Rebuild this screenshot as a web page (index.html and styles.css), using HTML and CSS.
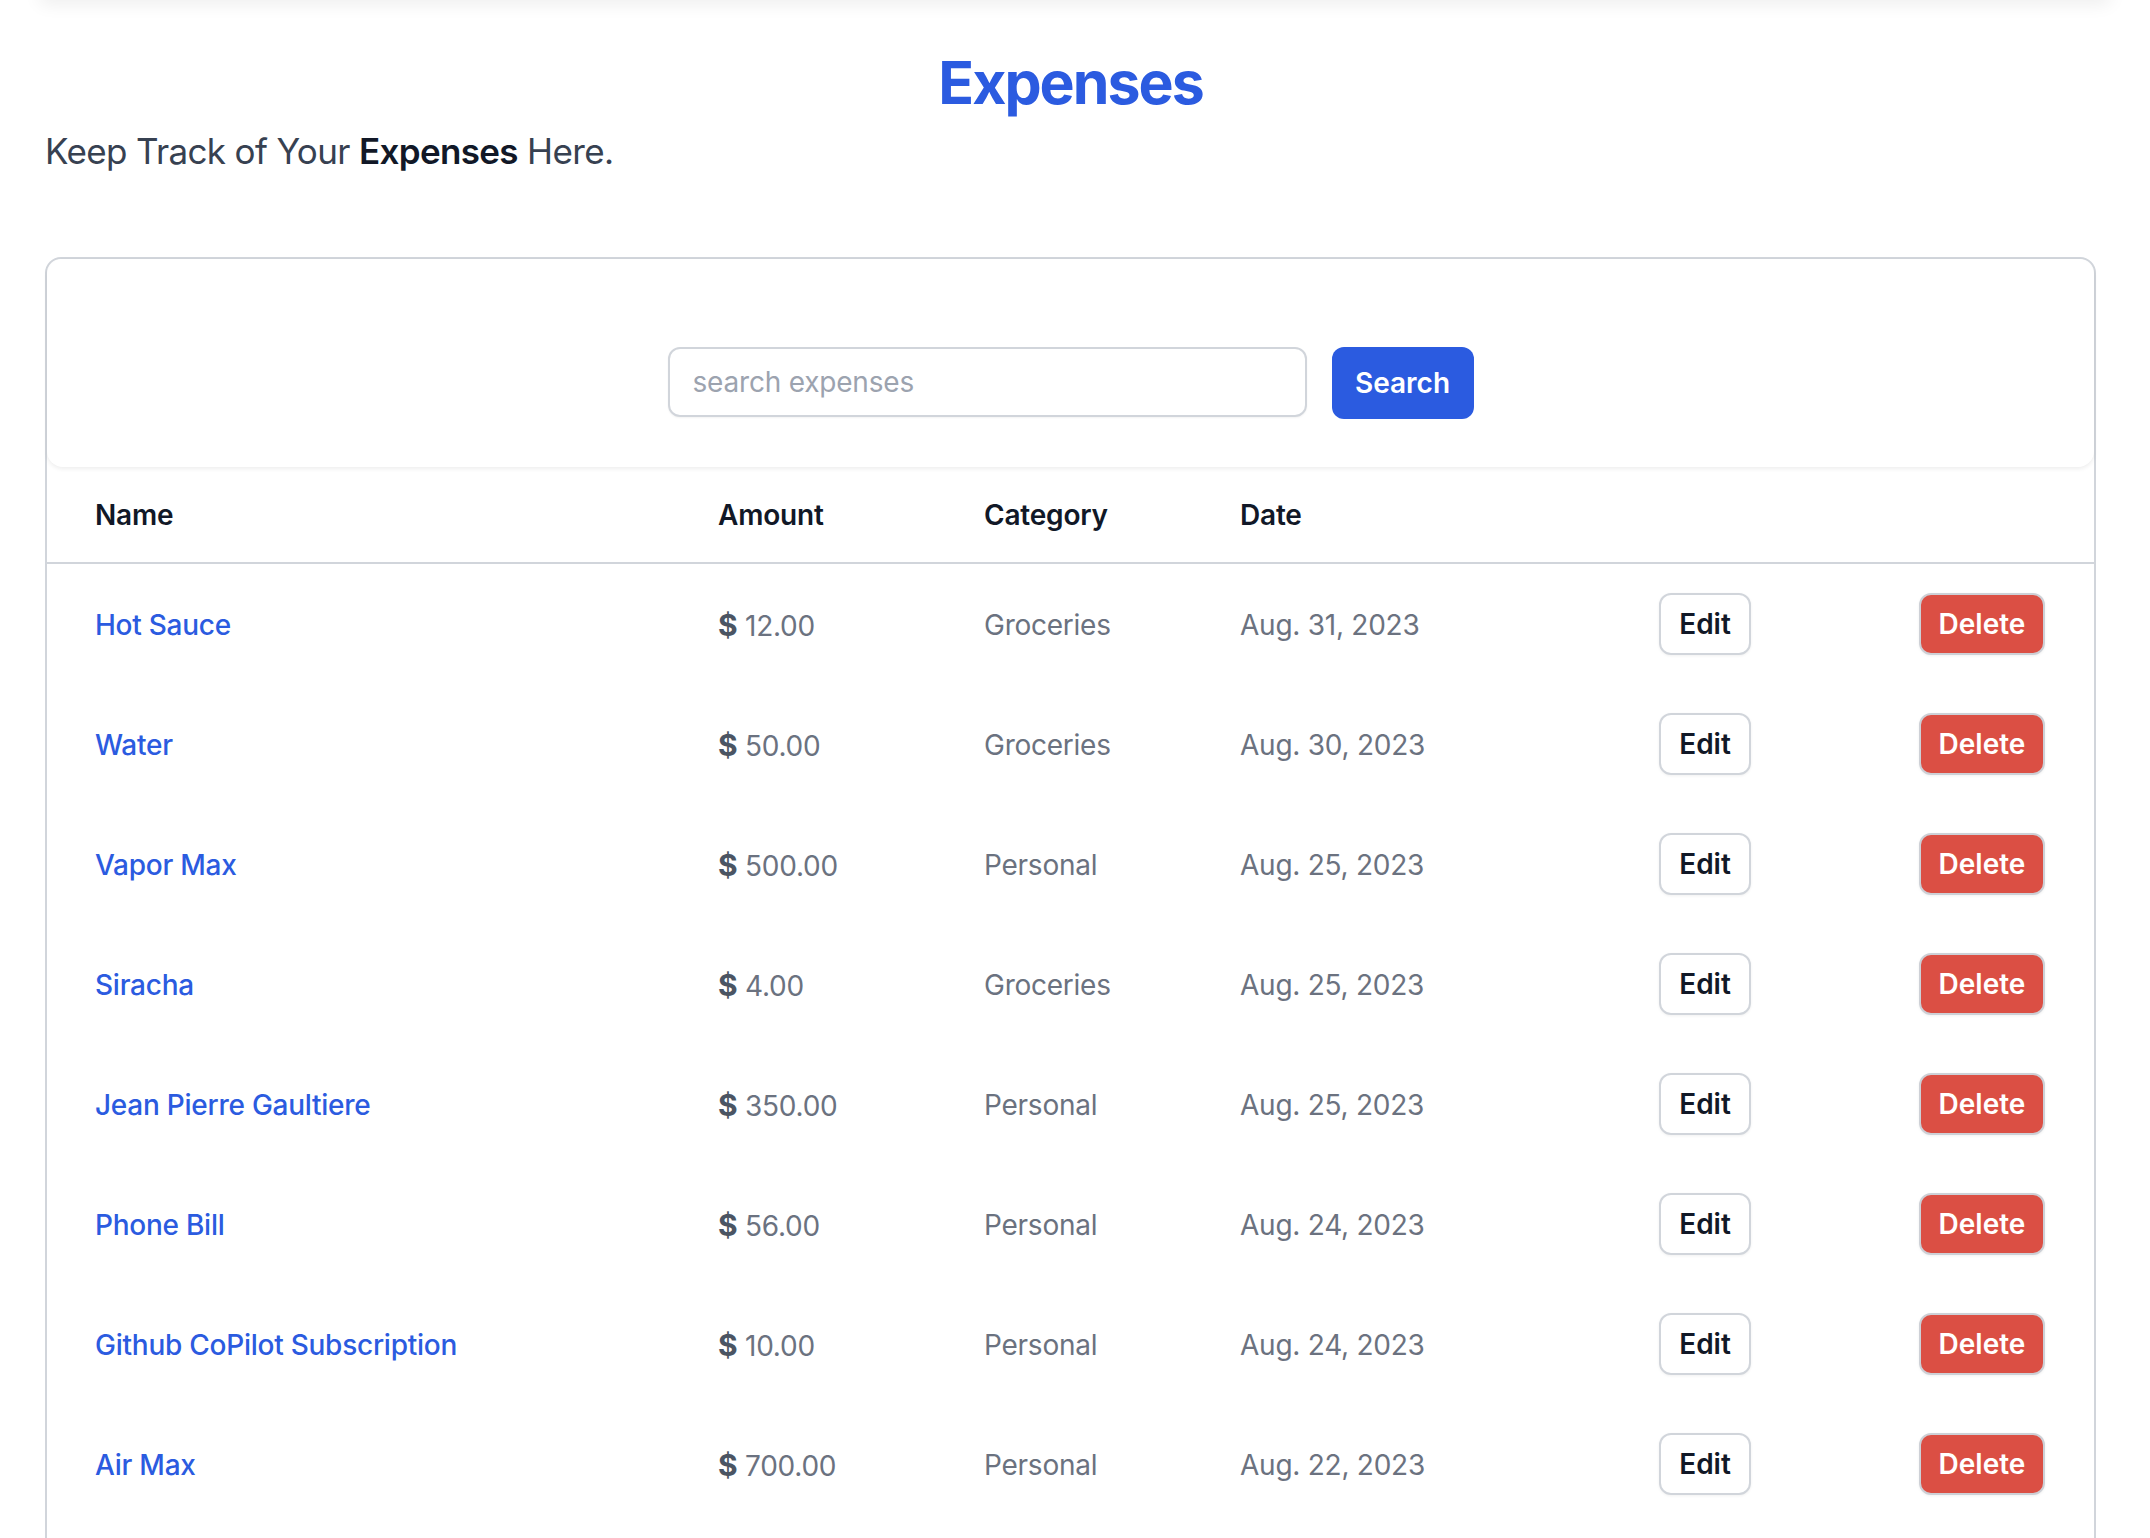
FILE: index.html
```html
<!DOCTYPE html>
<html lang="en">
<head>
<meta charset="utf-8">
<title>Expenses</title>
<link rel="stylesheet" href="styles.css">
</head>
<body>
<div class="navbar"></div>
<main class="container">
  <h1 class="title">Expenses</h1>
  <p class="subtitle">Keep Track of Your <strong>Expenses</strong> Here.</p>
  <section class="card">
    <form class="search">
      <input class="search-input" type="text" placeholder="search expenses">
      <button class="btn btn-primary" type="button">Search</button>
    </form>
    <table class="table">
      <colgroup>
        <col class="col-name"><col class="col-amount"><col class="col-category"><col class="col-date"><col class="col-edit"><col class="col-delete">
      </colgroup>
      <thead>
        <tr><th>Name</th><th>Amount</th><th>Category</th><th>Date</th><th></th><th></th></tr>
      </thead>
      <tbody>
        <tr><td><a class="name" href="#">Hot Sauce</a></td><td class="amount"><b>$</b> 12.00</td><td class="muted">Groceries</td><td class="muted">Aug. 31, 2023</td><td><button class="btn btn-edit" type="button">Edit</button></td><td><button class="btn btn-delete" type="button">Delete</button></td></tr>
        <tr><td><a class="name" href="#">Water</a></td><td class="amount"><b>$</b> 50.00</td><td class="muted">Groceries</td><td class="muted">Aug. 30, 2023</td><td><button class="btn btn-edit" type="button">Edit</button></td><td><button class="btn btn-delete" type="button">Delete</button></td></tr>
        <tr><td><a class="name" href="#">Vapor Max</a></td><td class="amount"><b>$</b> 500.00</td><td class="muted">Personal</td><td class="muted">Aug. 25, 2023</td><td><button class="btn btn-edit" type="button">Edit</button></td><td><button class="btn btn-delete" type="button">Delete</button></td></tr>
        <tr><td><a class="name" href="#">Siracha</a></td><td class="amount"><b>$</b> 4.00</td><td class="muted">Groceries</td><td class="muted">Aug. 25, 2023</td><td><button class="btn btn-edit" type="button">Edit</button></td><td><button class="btn btn-delete" type="button">Delete</button></td></tr>
        <tr><td><a class="name" href="#">Jean Pierre Gaultiere</a></td><td class="amount"><b>$</b> 350.00</td><td class="muted">Personal</td><td class="muted">Aug. 25, 2023</td><td><button class="btn btn-edit" type="button">Edit</button></td><td><button class="btn btn-delete" type="button">Delete</button></td></tr>
        <tr><td><a class="name" href="#">Phone Bill</a></td><td class="amount"><b>$</b> 56.00</td><td class="muted">Personal</td><td class="muted">Aug. 24, 2023</td><td><button class="btn btn-edit" type="button">Edit</button></td><td><button class="btn btn-delete" type="button">Delete</button></td></tr>
        <tr><td><a class="name" href="#">Github CoPilot Subscription</a></td><td class="amount"><b>$</b> 10.00</td><td class="muted">Personal</td><td class="muted">Aug. 24, 2023</td><td><button class="btn btn-edit" type="button">Edit</button></td><td><button class="btn btn-delete" type="button">Delete</button></td></tr>
        <tr><td><a class="name" href="#">Air Max</a></td><td class="amount"><b>$</b> 700.00</td><td class="muted">Personal</td><td class="muted">Aug. 22, 2023</td><td><button class="btn btn-edit" type="button">Edit</button></td><td><button class="btn btn-delete" type="button">Delete</button></td></tr>
      </tbody>
    </table>
  </section>
</main>
</body>
</html>
```

FILE: styles.css
```css
* { box-sizing: border-box; }

html, body { background: #ffffff; }

body {
  margin: 0;
  font-family: Inter, "Noto Sans", "Liberation Sans", sans-serif;
  color: #111827;
}

.navbar {
  height: 20px;
  margin: -20px 40px 0 40px;
  background: #ffffff;
  box-shadow: 0 4px 18px rgba(0, 0, 0, 0.07);
}

.container {
  width: 2051px;
  margin-left: 45px;
  padding-top: 47px;
}

.title {
  margin: 0;
  font-size: 59px;
  line-height: 72px;
  font-weight: 700;
  color: #2b5be0;
  text-align: center;
  letter-spacing: -2px;
}

.subtitle {
  margin: 8px 0 0 0;
  font-size: 35px;
  line-height: 48px;
  color: #374151;
  letter-spacing: -0.65px;
}

.subtitle strong {
  font-weight: 600;
  color: #111827;
}

.card {
  margin-top: 82px;
  border: 2px solid #d1d5db;
  border-radius: 16px;
  padding-bottom: 40px;
}

.search {
  margin: 0;
  display: flex;
  justify-content: center;
  align-items: flex-start;
  gap: 25px;
  padding: 88px 0 48px 0;
  border-radius: 16px;
  box-shadow: 0 2px 4px rgba(0, 0, 0, 0.07);
  background: #ffffff;
}

.search-input {
  width: 639px;
  height: 70px;
  padding: 0 23px;
  border: 2px solid #d1d5db;
  border-radius: 12px;
  font-family: inherit;
  font-size: 28px;
  letter-spacing: -0.2px;
  color: #111827;
  box-shadow: 0 1px 2px rgba(0, 0, 0, 0.05);
  outline: none;
}

.search-input::placeholder { color: #9ca3af; }

.btn {
  font-family: inherit;
  font-size: 28px;
  font-weight: 600;
  border-radius: 12px;
  cursor: pointer;
  padding: 0;
}

.btn-primary {
  width: 142px;
  height: 72px;
  background: #2b5be0;
  color: #ffffff;
  border: none;
}

.table {
  width: 100%;
  border-collapse: collapse;
  table-layout: fixed;
}

.col-name { width: 623px; }
.col-amount { width: 266px; }
.col-category { width: 256px; }
.col-date { width: 419px; }
.col-edit { width: 260px; }
.col-delete { width: 223px; }

.table th {
  height: 96px;
  padding: 0 48px;
  text-align: left;
  font-size: 28px;
  font-weight: 600;
  color: #111827;
  letter-spacing: -0.2px;
  border-bottom: 2px solid #d1d5db;
}

.table td {
  height: 120px;
  padding: 3px 48px 0 48px;
  font-size: 28px;
  letter-spacing: -0.25px;
  vertical-align: middle;
  white-space: nowrap;
}

.name {
  color: #2b5be0;
  font-weight: 500;
  text-decoration: none;
}

.muted { color: #6b7280; }

.amount { color: #6b7280; }

.amount b {
  font-weight: 700;
  font-size: 30px;
  color: #4b5563;
}

.btn-edit {
  width: 92px;
  height: 62px;
  margin-top: -2px;
  background: #ffffff;
  color: #111827;
  border: 2px solid #d1d5db;
  box-shadow: 0 1px 3px rgba(0, 0, 0, 0.06);
  display: block;
}

.btn-delete {
  width: 126px;
  height: 62px;
  margin-top: -2px;
  background: #db4f44;
  color: #ffffff;
  border: 2px solid #cdd0d6;
  box-shadow: 0 1px 3px rgba(0, 0, 0, 0.06);
  display: block;
}
```
